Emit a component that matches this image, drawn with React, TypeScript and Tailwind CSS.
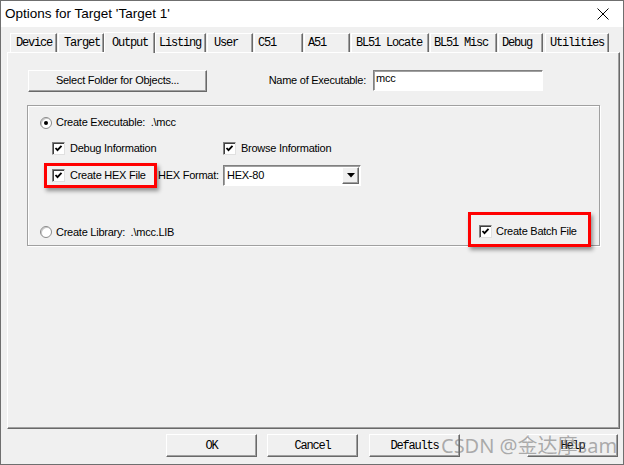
import React from "react";

const mono = "font-['Liberation_Mono',monospace] text-[12px] tracking-[-1.2px] text-black";
const sans = "font-['Liberation_Sans',Arial,sans-serif] text-[11px] tracking-[-0.25px] text-black";
const raised =
  "bg-[#f0f0f0] border border-t-white border-l-white border-r-[#696969] border-b-[#696969] shadow-[inset_-1px_-1px_0_#a0a0a0]";
const sunken =
  "bg-white border border-t-[#808080] border-l-[#808080] border-r-white border-b-white shadow-[inset_1px_1px_0_#a0a0a0]";

function Check() {
  return (
    <span className="w-[13px] h-[13px] shrink-0 bg-white border border-t-[#808080] border-l-[#808080] border-r-[#e0e0e0] border-b-[#e0e0e0] shadow-[inset_1px_1px_0_#404040] flex items-center justify-center">
      <svg width="9" height="9" viewBox="0 0 9 9">
        <polyline points="1.5,4 3.5,6.2 7.5,1.8" fill="none" stroke="#000" strokeWidth="1.8" />
      </svg>
    </span>
  );
}

function Radio({ on }: { on?: boolean }) {
  return (
    <span className="w-[12px] h-[12px] shrink-0 rounded-full bg-white border border-[#8a8a8a] shadow-[inset_1px_1px_0_#c8c8c8] flex items-center justify-center">
      {on && <span className="w-[4px] h-[4px] rounded-full bg-black" />}
    </span>
  );
}

const tabs = [
  { label: "Device", cls: "ml-[3px] w-[47px] pl-[5px]" },
  { label: "Target", cls: "ml-[1px] w-[46px] pl-[5px]" },
  { label: "Output", cls: "w-[51px] pl-[7px]", active: true },
  { label: "Listing", cls: "w-[51px] pl-[3px]" },
  { label: "User", cls: "ml-[1px] w-[46px] pl-[6px]" },
  { label: "C51", cls: "ml-[1px] w-[49px] pl-[3px]" },
  { label: "A51", cls: "ml-[1px] w-[46px] pl-[3px]" },
  { label: "BL51 Locate", cls: "ml-[1px] w-[78px] pl-[4px]" },
  { label: "BL51 Misc", cls: "ml-[1px] w-[67px] pl-[3px]" },
  { label: "Debug", cls: "ml-[1px] w-[45px] pl-[3px]" },
  { label: "Utilities", cls: "ml-[2px] w-[64px] pl-[4px]" },
];

export default function App() {
  return (
    <div className="relative w-[624px] h-[465px] bg-[#f0f0f0] border border-[#6f6f6f] flex flex-col overflow-hidden">
      {/* Title bar */}
      <div className="h-[26px] bg-white flex items-center justify-between pl-[4px] pr-[14px] shrink-0">
        <span className="font-['Liberation_Sans',Arial,sans-serif] text-[13.5px] text-black">
          Options for Target 'Target 1'
        </span>
        <svg width="12" height="12" viewBox="0 0 12 12">
          <path d="M0.5 0.5 L11.5 11.5 M11.5 0.5 L0.5 11.5" stroke="#000" strokeWidth="1" />
        </svg>
      </div>

      {/* Tabs + panel */}
      <div className="pl-[6px] pt-[5px] flex flex-col">
        <div className="flex items-end h-[20px]">
          {tabs.map((t) =>
            t.active ? (
              <div
                key={t.label}
                className={`${t.cls} ${mono} relative z-10 h-[21px] -mb-[1px] bg-[#f0f0f0] border-t border-l border-t-white border-l-white border-r border-r-[#696969] shadow-[inset_-1px_0_0_#a0a0a0] flex items-center whitespace-pre`}
              >
                {t.label}
              </div>
            ) : (
              <div
                key={t.label}
                className={`${t.cls} ${mono} h-[19px] bg-[#f0f0f0] border-t border-l border-t-white border-l-white border-r border-r-[#696969] shadow-[inset_-1px_0_0_#a0a0a0] flex items-center whitespace-pre`}
              >
                {t.label}
              </div>
            )
          )}
        </div>

        <div className={`w-[613px] h-[377px] ${raised} flex flex-col`}>
          {/* Row 1 */}
          <div className="pt-[16px] pl-[20px] flex items-center h-[39px]">
            <div className={`w-[179px] h-[22px] ${raised} ${sans} flex items-center justify-center`}>
              Select Folder for Objects...
            </div>
            <div className={`w-[159px] ${sans} text-right`}>Name of Executable:</div>
            <div className={`ml-[7px] w-[170px] h-[21px] ${sunken} ${sans} pl-[2px] pt-[1px] leading-[13px]`}>
              mcc
            </div>
          </div>

          {/* Group box */}
          <div className="ml-[19px] mt-[13px] w-[573px] h-[141px] border border-[#a0a0a0] shadow-[inset_1px_1px_0_#fff,1px_1px_0_#fff] flex flex-col">
            <div className={`mt-[10px] h-[13px] pl-[12px] flex items-center gap-[4px] ${sans} whitespace-pre`}>
              <Radio on />
              <span>{"Create Executable:  .\\mcc"}</span>
            </div>

            <div className={`mt-[13px] h-[13px] pl-[24px] flex items-center ${sans}`}>
              <div className="w-[171px] flex items-center gap-[5px]">
                <Check />
                <span>Debug Information</span>
              </div>
              <div className="flex items-center gap-[5px]">
                <Check />
                <span>Browse Information</span>
              </div>
            </div>

            <div className={`mt-[8px] h-[25px] pl-[16px] flex items-center ${sans}`}>
              <div className="w-[113px] h-[25px] border-[3px] border-[#ff0000] shadow-[2px_3px_4px_rgba(0,0,0,0.4)] pl-[5px] flex items-center gap-[5px]">
                <Check />
                <span>Create HEX File</span>
              </div>
              <div className="w-[66px] pl-[1px]">HEX Format:</div>
              <div className={`w-[138px] h-[21px] ${sunken} flex items-center justify-between pl-[3px] pr-[1px]`}>
                <span>HEX-80</span>
                <span className={`w-[17px] h-[17px] ${raised} flex items-center justify-center`}>
                  <svg width="8" height="5" viewBox="0 0 8 5">
                    <path d="M0 0 H8 L4 4.5 Z" fill="#000" />
                  </svg>
                </span>
              </div>
            </div>

            <div className={`mt-[24px] h-[35px] flex justify-between pr-[8px] ${sans}`}>
              <div className="pl-[12px] pt-[5px] flex items-center gap-[4px] whitespace-pre">
                <Radio />
                <span>{"Create Library:  .\\mcc.LIB"}</span>
              </div>
              <div className="w-[123px] h-[35px] border-[3px] border-[#ff0000] shadow-[2px_3px_4px_rgba(0,0,0,0.4)] pl-[8px] pt-[4px] flex items-center gap-[4px]">
                <Check />
                <span>Create Batch File</span>
              </div>
            </div>
          </div>
        </div>
      </div>

      {/* Bottom buttons */}
      <div className="mt-[5px] pl-[165px] flex">
        <div className={`w-[91px] h-[23px] ${raised} ${mono} flex items-center justify-center`}>OK</div>
        <div className={`ml-[10px] w-[91px] h-[23px] ${raised} ${mono} flex items-center justify-center`}>Cancel</div>
        <div className={`ml-[11px] w-[91px] h-[23px] ${raised} ${mono} flex items-center justify-center`}>Defaults</div>
        <div className={`ml-[67px] w-[91px] h-[23px] ${raised} ${mono} flex items-center justify-center`}>Help</div>
      </div>

      {/* Watermark */}
      <div className="absolute left-[440px] top-[432px] font-['Noto_Sans','Noto_Sans_CJK_SC',sans-serif] text-[20px] leading-[26px] text-[rgba(110,110,110,0.55)] whitespace-pre pointer-events-none">
        CSDN @金达摩sam
      </div>
    </div>
  );
}
